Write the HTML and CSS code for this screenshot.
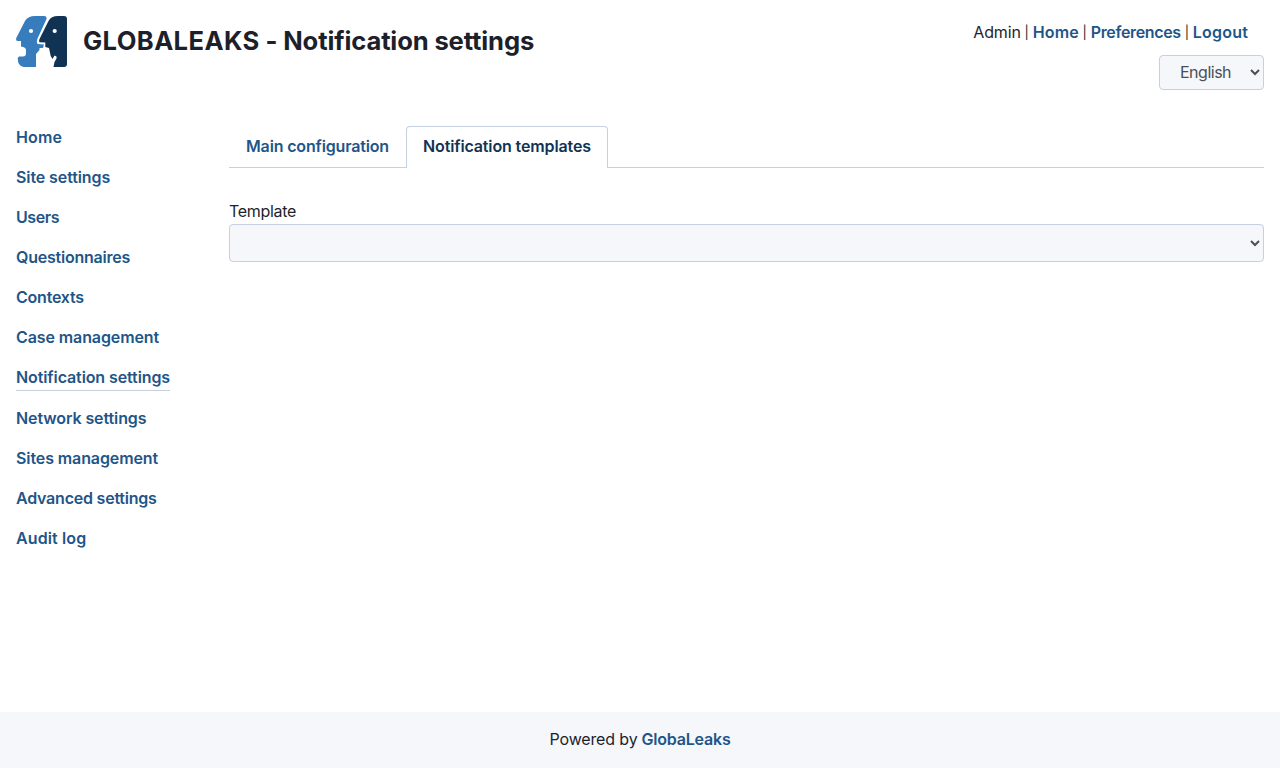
FILE: index.html
```html
<!DOCTYPE html>
<html lang="en">
<head>
<meta charset="utf-8">
<title>GLOBALEAKS - Notification settings</title>
<link rel="stylesheet" href="styles.css">
</head>
<body>
<header class="header">
  <div class="brand">
    <svg class="logo" viewBox="0 0 51 51" aria-hidden="true">
      <path fill="#377dbe" d="M19 0H28Q31 0 30.500 3L21.300 23Q20.300 26 21.500 28L28 28.500L27 32H23.500V34L20 38V51H7.500Q1.700 50 1.700 42L3 40.500H7Q10 40.500 10 37V34Q10 31 5 30.500V25H1.500Q0 25 0 22.500L9 5Q12 0 19 0Z"/>
      <path fill="#113353" d="M42 0H48Q51 0 51 3V48Q51 51 48 51H37.500L38.500 46L40.500 42.500V40.500L38.500 39.500L36.500 43L34.700 40L33 32L29.300 31V26.500L23.500 26.300Q22.500 25.500 23.500 23L32.500 5Q35 0 42 0Z"/>
      <circle cx="15" cy="15" r="2.100" fill="#fff"/><circle cx="38.700" cy="15" r="2.100" fill="#fff"/>
    </svg>
    <h1 class="title"><span class="site-name">GLOBALEAKS</span> - Notification settings</h1>
  </div>
  <div class="tools">
    <div class="account"><span class="user">Admin</span><span class="bar">|</span><a class="home">Home</a><span class="bar">|</span><a class="preferences">Preferences</a><span class="bar">|</span><a class="logout">Logout</a></div>
    <select class="language" aria-label="Language"><option>English</option></select>
  </div>
</header>
<div class="body">
  <nav class="menu">
    <a class="loose">Home</a>
    <a>Site settings</a>
    <a class="tighter">Users</a>
    <a class="tight">Questionnaires</a>
    <a class="tight">Contexts</a>
    <a>Case management</a>
    <a class="current">Notification settings</a>
    <a>Network settings</a>
    <a>Sites management</a>
    <a class="tight">Advanced settings</a>
    <a class="loose">Audit log</a>
  </nav>
  <main class="content">
    <div class="tabs"><a class="tab">Main configuration</a><a class="tab active">Notification templates</a></div>
    <label class="label" for="template">Template</label>
    <select class="template" id="template"></select>
  </main>
</div>
<footer class="footer"><span class="powered">Powered by</span><a class="product">GlobaLeaks</a></footer>
</body>
</html>
```
FILE: styles.css
```css
* { box-sizing: border-box; }
body { margin: 0; min-height: 768px; display: flex; flex-direction: column; font: 16px/24px Inter, sans-serif; color: #1d1f2b; background: #fff; }
a { color: #1f5588; font-weight: 600; text-decoration: none; }
.header { display: flex; justify-content: space-between; padding: 16px 16px 0; height: 126px; }
.brand { display: flex; gap: 16px; }
.logo { width: 51px; height: 51px; }
.title { margin: 9px 0 0; font-size: 25.6px; line-height: 32px; font-weight: 700; letter-spacing: -0.14px; white-space: nowrap; }
.site-name { letter-spacing: 0.38px; }
.tools { display: flex; flex-direction: column; align-items: flex-end; padding-top: 4px; }
.account { display: flex; gap: 4px; padding-right: 16px; white-space: nowrap; }
.user { letter-spacing: -0.15px; }
.bar { width: 4px; display: flex; justify-content: center; font-size: 13px; }
.home { letter-spacing: 0.12px; }
.preferences { letter-spacing: -0.35px; }
.logout { letter-spacing: 0.2px; }
.language { width: 105px; height: 35px; margin-top: 11px; padding: 0 16px 2px; font: inherit; letter-spacing: -0.5px; color: #495057; background: #f5f7fb; border: 1px solid #c5d0e0; border-radius: 4px; }
.body { display: flex; flex: 1; padding: 0 16px; }
.menu { width: 213px; display: flex; flex-direction: column; align-items: flex-start; gap: 16px; }
.menu a { padding-bottom: 2px; line-height: 22px; letter-spacing: -0.1px; white-space: nowrap; }
.menu .tight { letter-spacing: -0.22px; }
.menu .tighter { letter-spacing: -0.4px; }
.menu .loose { letter-spacing: 0.12px; }
.menu .current { border-bottom: 1px solid #c5d0e0; }
.content { flex: 1; }
.tabs { display: flex; height: 42px; border-bottom: 1px solid #c5d0e0; }
.tab { padding: 7px 16px; height: 42px; border: 1px solid transparent; border-bottom: 0; letter-spacing: -0.16px; white-space: nowrap; }
.tab.active { color: #113353; background: #fff; border-color: #c5d0e0; border-radius: 4px 4px 0 0; letter-spacing: -0.13px; }
.label { display: block; margin-top: 31px; padding-bottom: 1px; letter-spacing: -0.3px; }
.template { display: block; width: 100%; height: 38px; font: inherit; color: #495057; background: #f5f7fb; border: 1px solid #c5d0e0; border-radius: 4px; }
.footer { height: 56px; display: flex; gap: 4px; justify-content: center; align-items: center; padding-bottom: 2px; background: #f5f7fb; }
.powered { letter-spacing: -0.14px; }
.product { letter-spacing: -0.2px; }
```
